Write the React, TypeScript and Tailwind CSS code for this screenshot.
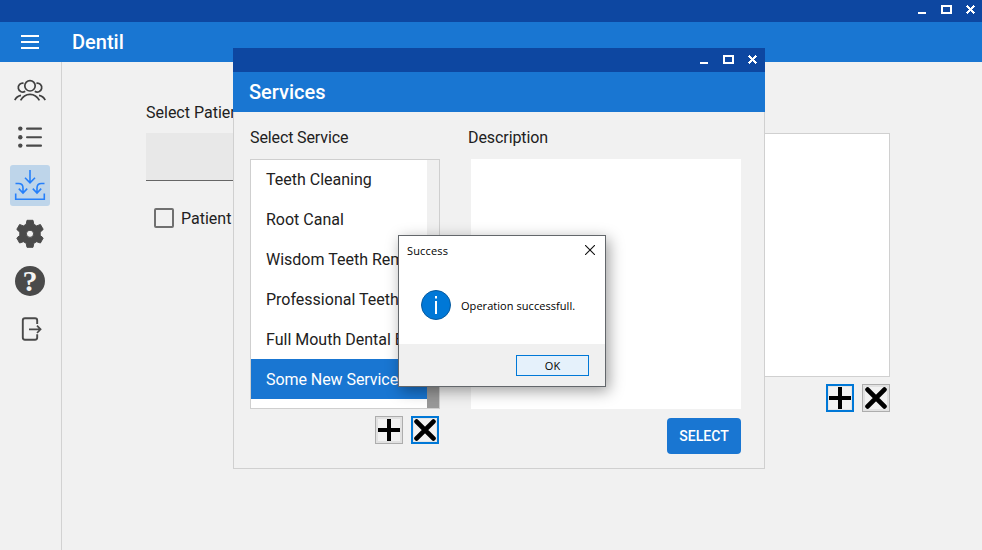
import React from "react";

function WindowControls() {
  return (
    <svg width="57" height="9" viewBox="0 0 57 9" shapeRendering="crispEdges" className="block">
      <rect x="0" y="7" width="8" height="2" fill="#fff" />
      <path d="M23 0h11v9H23z M25 2v5h7V2z" fill="#fff" fillRule="evenodd" />
      <path
        d="M49 0h1v1h1v1h1v1h1V2h1V1h1V0h1v1h1v1h-1v1h-1v1h-1v1h1v1h1v1h1v1h-1v1h-1V8h-1V7h-1V6h-1v1h-1v1h-1v1h-1V8h-1V7h1V6h1V5h1V4h-1V3h-1V2h-1V1h1z"
        fill="#fff"
      />
    </svg>
  );
}

function PlusIcon() {
  return (
    <svg width="22" height="22" viewBox="0 0 22 22" className="block">
      <path d="M11 0V22M0 11H22" stroke="#000" strokeWidth="4" />
    </svg>
  );
}

function CrossIcon() {
  return (
    <svg width="22" height="22" viewBox="0 0 22 22" className="block">
      <path d="M2.6 2.6L19.4 19.4M19.4 2.6L2.6 19.4" stroke="#000" strokeWidth="4.8" strokeLinecap="round" />
    </svg>
  );
}

function SquareButton({ active, children }: { active?: boolean; children: React.ReactNode }) {
  return (
    <button
      className={
        active
          ? "flex h-7 w-7 items-center justify-center border-2 border-[#0078d7] bg-[#e6e6e6]"
          : "flex h-7 w-7 items-center justify-center border border-[#adadad] bg-[#e1e1e1]"
      }
    >
      <span className="block bg-[#f2f2f2]">{children}</span>
    </button>
  );
}

function Sidebar() {
  return (
    <nav className="flex w-[62px] shrink-0 flex-col items-center border-r border-[#d2d2d2] pr-px pt-[7px]">
      <svg width="40" height="48" viewBox="0 0 40 48" fill="none" stroke="#404040" strokeWidth="1.7">
        <circle cx="20" cy="16.8" r="5.2" />
        <path d="M13.6 14.3A4.4 4.4 0 1 0 15.2 22.2M26.4 14.3A4.4 4.4 0 1 1 24.8 22.2" />
        <path d="M10.6 31.4C12.6 27.6 15.8 25.3 20 25.3S27.4 27.6 29.4 31.4" />
        <path d="M4.8 31.2C6 28.6 8.2 27 11 26.4M35.2 31.2C34 28.6 31.8 27 29 26.4" />
      </svg>
      <svg width="40" height="48" viewBox="0 0 40 48" fill="#4a4a4a">
        <circle cx="10.3" cy="11.6" r="2.2" />
        <circle cx="10.3" cy="20.2" r="2.2" />
        <circle cx="10.3" cy="28.6" r="2.2" />
        <rect x="16" y="10.6" width="16" height="2.1" rx="1" />
        <rect x="16" y="19.2" width="16" height="2.1" rx="1" />
        <rect x="16" y="27.6" width="16" height="2.1" rx="1" />
      </svg>
      <div className="h-[41px] w-10 rounded-[3px] bg-[#bed5ea]">
        <svg width="40" height="41" viewBox="0 0 40 41" fill="none" stroke="#2680fa" strokeWidth="1.6">
          <path d="M20 5V17.5M15 12.8L20 17.8L25 12.8" />
          <path d="M5.5 18.5H8.6C11.4 18.5 13 20.1 13 23V27.8M8.8 23.6L13 28L17.2 23.6" />
          <path d="M34.5 18.5H31.4C28.6 18.5 27 20.1 27 23V27.8M31.2 23.6L27 28L22.8 23.6" />
          <path d="M5.7 28.5V34.3H34.3V28.5" />
        </svg>
      </div>
      <svg width="40" height="48" viewBox="0 0 40 48" className="mt-[3px]" fill="#4a4a4a">
        <path
          fillRule="evenodd"
          stroke="#4a4a4a"
          strokeWidth="1"
          strokeLinejoin="round"
          d="M17 11.3H23L23.8 15.3L26.6 16.9L30.4 15.5L33.2 20.4L30.2 23.2V26.4L33.2 29L30.4 34L26.6 32.7L23.8 34.3L23 38.3H17L16.2 34.3L13.4 32.7L9.6 34L6.8 29L9.8 26.4V23.2L6.8 20.4L9.6 15.5L13.4 16.9L16.2 15.3ZM20 21.2A3.6 3.6 0 1 0 20 28.4A3.6 3.6 0 1 0 20 21.2Z"
        />
      </svg>
      <div className="mt-[9px] flex h-[30px] w-[30px] items-center justify-center rounded-full bg-[#4a4a4a] font-['Liberation_Serif',serif] text-[30px] leading-[30px] font-bold text-[#f4f4f4]">
        ?
      </div>
      <svg width="40" height="48" viewBox="0 0 40 48" className="mt-[10px]" fill="none" stroke="#4a4a4a" strokeWidth="1.9">
        <path d="M27.2 18V14.5Q27.2 12.3 25 12.3H15Q12.8 12.3 12.8 14.5V31.5Q12.8 33.7 15 33.7H25Q27.2 33.7 27.2 31.5V28.2" />
        <path d="M19 23.3H30M27 19.6L30.6 23.3L27 27" strokeWidth="1.7" />
      </svg>
    </nav>
  );
}

const services = [
  "Teeth Cleaning",
  "Root Canal",
  "Wisdom Teeth Removal",
  "Professional Teeth Whitening",
  "Full Mouth Dental Exam",
  "Some New Service",
];

function ServicesWindow() {
  return (
    <section className="absolute top-12 left-[233px] flex h-[421px] w-[532px] flex-col bg-[#f1f1f1]">
      <div className="flex h-6 shrink-0 justify-end bg-[#0d47a1] pt-[7px] pr-2">
        <WindowControls />
      </div>
      <h2 className="flex h-10 shrink-0 items-center bg-[#1976d2] pl-4 text-[20px] font-medium text-white">Services</h2>
      <div className="flex grow justify-between border-x border-b border-[#d0d0d0] pr-[23px] pl-4">
        <div className="w-[190px] pt-[14px]">
          <div className="h-[33px] leading-6 tracking-[-0.12px]">Select Service</div>
          <div className="flex h-[250px] border border-[#cfcfcf] bg-white">
            <ul className="w-[176px] shrink-0 overflow-hidden">
              {services.map((name, i) => (
                <li
                  key={name}
                  className={
                    i === services.length - 1
                      ? "-mt-px flex h-10 items-center bg-[#1976d2] pt-[2px] pl-[15px] tracking-[-0.06px] whitespace-nowrap text-white"
                      : "flex h-10 items-center pl-[15px] whitespace-nowrap first:pb-px"
                  }
                >
                  {name}
                </li>
              ))}
            </ul>
            <div className="flex grow flex-col justify-end bg-[#f0f0f0]">
              <div className="h-[120px] bg-[#999999]" />
            </div>
          </div>
          <div className="flex justify-end gap-2 pt-[7px] pr-px">
            <SquareButton>
              <PlusIcon />
            </SquareButton>
            <SquareButton active>
              <CrossIcon />
            </SquareButton>
          </div>
        </div>
        <div className="flex w-[273px] flex-col items-end pt-[14px]">
          <div className="h-[33px] w-full leading-6 tracking-[-0.08px]">Description</div>
          <div className="h-[250px] w-[270px] bg-white" />
          <button className="mt-[9px] h-9 w-[74px] rounded-[4px] bg-[#1976d2] text-[14px] font-medium text-white">
            SELECT
          </button>
        </div>
      </div>
    </section>
  );
}

function MessageBox() {
  return (
    <section className="absolute top-[235px] left-[398px] flex h-[152px] w-[208px] flex-col border border-[#63676b] bg-white font-['Open_Sans','Noto_Sans',sans-serif] text-[11px] text-black shadow-[3px_4px_14px_rgba(0,0,0,0.38)]">
      <div className="flex h-[30px] items-center justify-between pr-[10px] pl-2">
        <span className="tracking-[0.15px]">Success</span>
        <svg width="10" height="10" viewBox="0 0 10 10" stroke="#111" strokeWidth="1.1" className="-mt-[2px]">
          <path d="M0 0L10 10M10 0L0 10" />
        </svg>
      </div>
      <div className="flex grow items-center pl-[22px]">
        <svg width="30" height="30" viewBox="0 0 30 30" className="-mt-px shrink-0">
          <circle cx="15" cy="15" r="14.5" fill="#0078d7" stroke="#075a9e" />
          <path d="M14 6h2v2.4h-2zM14 11h2v13h-2z" fill="#fff" />
        </svg>
        <span className="mt-[3px] ml-[10px] tracking-[0.05px] whitespace-nowrap">Operation successfull.</span>
      </div>
      <div className="flex h-[42px] shrink-0 items-start justify-end bg-[#f0f0f0] pt-[11px] pr-4">
        <button className="flex h-[21px] w-[73px] items-center justify-center border border-[#0078d7] bg-[#e5f1fb] pt-[2px]">
          OK
        </button>
      </div>
    </section>
  );
}

export default function App() {
  return (
    <div className="relative flex h-[550px] w-[982px] flex-col overflow-hidden bg-[#f1f1f1] font-['Roboto',sans-serif] text-[16px] text-[#212121]">
      <div className="flex h-[22px] shrink-0 justify-end bg-[#0d47a1] pt-[5px] pr-[7px]">
        <WindowControls />
      </div>
      <header className="flex h-10 shrink-0 items-center bg-[#1976d2] pl-[21px] text-white">
        <svg width="18" height="14" viewBox="0 0 18 14" fill="#fff" shapeRendering="crispEdges">
          <path d="M0 0h18v2H0zM0 6h18v2H0zM0 12h18v2H0z" />
        </svg>
        <h1 className="ml-[33px] text-[20px] font-medium">Dentil</h1>
      </header>
      <div className="flex grow">
        <Sidebar />
        <main className="flex grow justify-between pr-[92px] pl-[84px]">
          <div className="w-[280px] pt-[39px]">
            <div className="h-[32px] leading-6">Select Patient</div>
            <div className="h-12 border-b border-[#666] bg-[#e8e8e8]" />
            <label className="mt-[27px] flex items-center gap-[7px] pl-2 leading-5">
              <span className="block h-5 w-5 rounded-[2px] border-2 border-[#707070]" />
              <span className="pt-px leading-[19px]">Patient</span>
            </label>
          </div>
          <div className="w-[390px] pt-[71px]">
            <div className="h-[244px] border border-[#d0d0d0] bg-white" />
            <div className="flex justify-end gap-2 pt-[7px]">
              <SquareButton active>
                <PlusIcon />
              </SquareButton>
              <SquareButton>
                <CrossIcon />
              </SquareButton>
            </div>
          </div>
        </main>
      </div>
      <ServicesWindow />
      <MessageBox />
    </div>
  );
}
